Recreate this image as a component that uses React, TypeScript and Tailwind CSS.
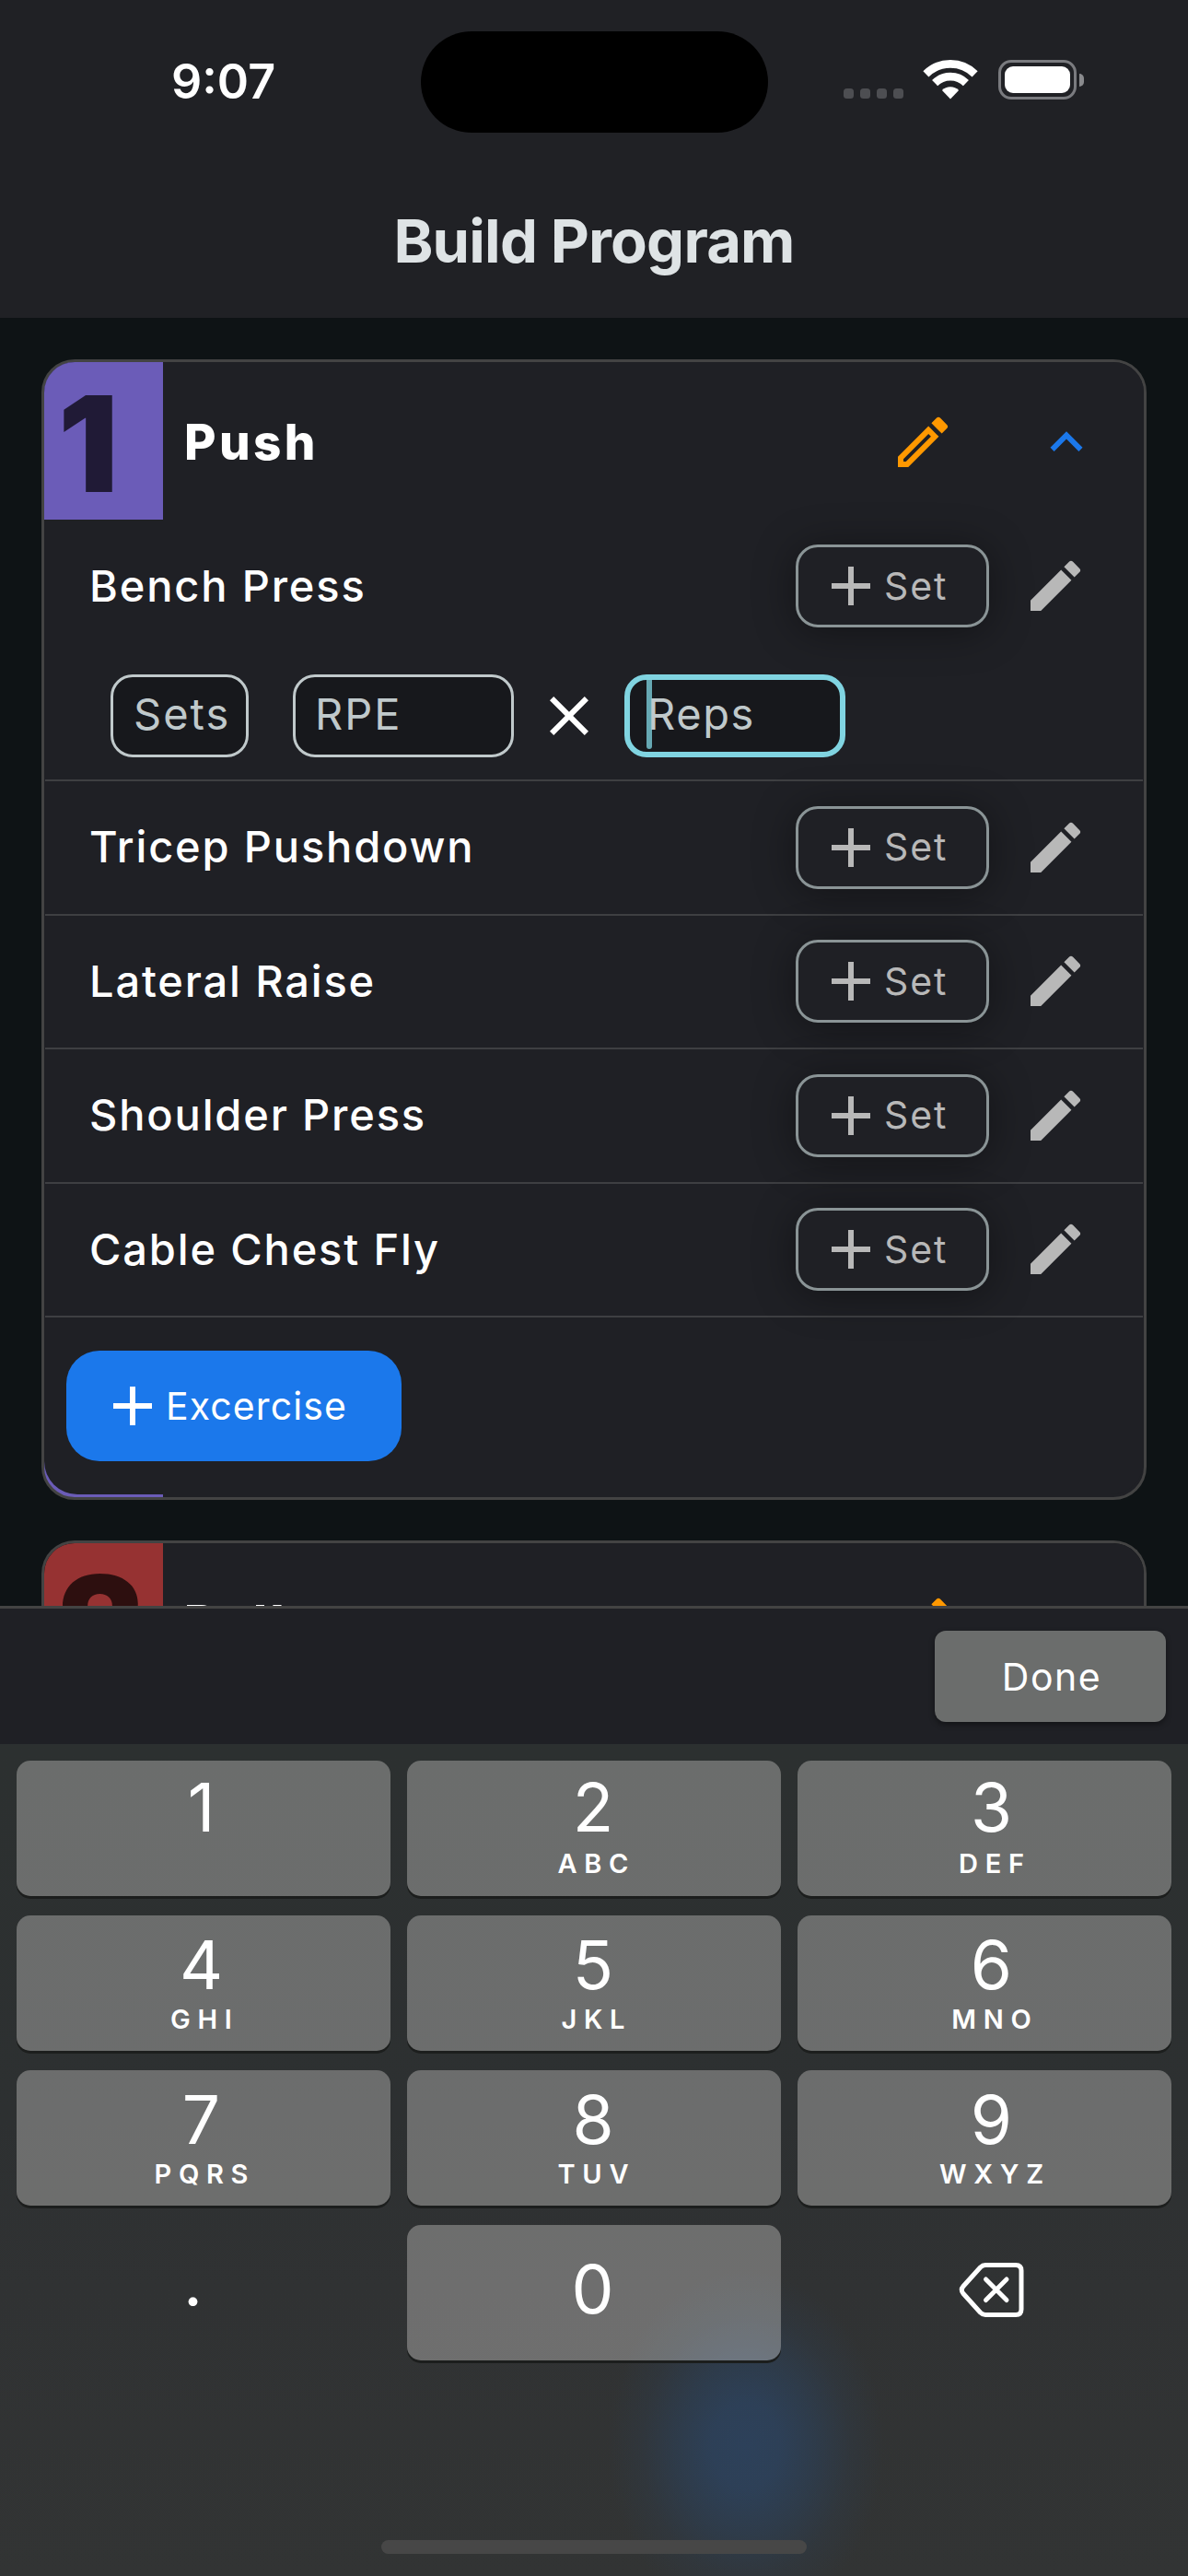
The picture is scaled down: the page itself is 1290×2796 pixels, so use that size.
import React from 'react';
import { MdAdd, MdClose, MdEdit, MdExpandLess, MdOutlineModeEdit } from 'react-icons/md';

function StatusBar() {
  return (
    <div className="flex h-[176px] pt-[34px]">
      <div className="h-[110px] w-[457px] pl-[186px] text-[52px] leading-[110px] font-semibold text-white">9:07</div>
      <div className="h-[110px] w-[377px] rounded-full bg-black" />
      <div className="ml-[82px] flex h-[73px] items-end gap-[7px]">
        {[0, 1, 2, 3].map((i) => (
          <div key={i} className="size-[11px] rounded-[3.5px] bg-[#4d4e52]" />
        ))}
      </div>
      <svg className="mt-[30px] ml-[21px] h-[45px] w-[60px]" viewBox="0 0 60 45" fill="none">
        <g stroke="#fff" strokeWidth="8.6">
          <path d="M3.4 16.4A37.6 37.6 0 0 1 56.6 16.4" />
          <path d="M13.1 26.1A23.9 23.9 0 0 1 46.9 26.1" />
        </g>
        <path d="M30 43.4L20.9 33.9A13.2 13.2 0 0 1 39.1 33.9Z" fill="#fff" />
      </svg>
      <div className="mt-[31px] ml-[22px] h-[43px] w-[85px] rounded-[14px] border-[3px] border-[#7a7b7f] p-[4px]">
        <div className="h-[29px] w-[71px] rounded-[9px] bg-white" />
      </div>
      <div className="mt-[46px] ml-[3px] h-[14px] w-[5px] rounded-r-full bg-[#8a8b8e]" />
    </div>
  );
}

function SetButton() {
  return (
    <button className="flex h-[90px] w-[210px] items-center rounded-[24px] border-[3px] border-[#8a9496] bg-[#1f2025] pl-[21px] text-[#b8b8b8] shadow-[0_4px_45px_rgba(0,0,0,0.4)]">
      <MdAdd size={72} />
      <span className="text-[41px] leading-none tracking-[1.9px]">Set</span>
    </button>
  );
}

function ExerciseRow({ name }: { name: string }) {
  return (
    <div className="flex h-[144px] items-center pr-[60px] pl-[49px]">
      <span className="flex-1 pb-[2px] text-[47px] leading-none font-medium tracking-[1.84px] text-white">{name}</span>
      <SetButton />
      <MdEdit size={72} className="ml-[36px] text-[#b8b8b8]" />
    </div>
  );
}

function Divider() {
  return <div className="mx-px mb-[-0.5px] h-[2px] bg-[#3e3f42]" />;
}

function SetInputs() {
  return (
    <div className="flex h-[138px] items-center pl-[72px] text-[47px] leading-[80px] tracking-[2px] text-[#c0c9cb]">
      <div className="h-[90px] w-[150px] rounded-[24px] border-[3px] border-[#c0c9cb] bg-[#17181c] pl-[22px]">Sets</div>
      <div className="ml-[48px] h-[90px] w-[240px] rounded-[24px] border-[3px] border-[#c0c9cb] bg-[#17181c] pl-[21px]">RPE</div>
      <MdClose size={72} className="mx-[24px] text-white" />
      <div className="flex h-[90px] w-[240px] rounded-[24px] border-[6px] border-[#80d4e1] bg-[#17181c] pl-[18px] leading-[74px]">
        <div className="-mr-[5px] h-[75px] w-[6px] rounded-b-[3px] bg-[#66a8b3]" />
        <span className="relative tracking-[1.6px]">Reps</span>
      </div>
    </div>
  );
}

function DayHeader({ num, name, tint, ink }: { num: string; name: string; tint: string; ink: string }) {
  return (
    <div className="flex h-[171px] shrink-0 items-center bg-[#1f2025] pr-[49px]">
      <div className={`flex h-full w-[129px] items-center pt-[5px] pl-[15px] text-[145px] leading-none font-black ${tint} ${ink}`}>
        {num}
      </div>
      <span className="flex-1 pt-[4px] pl-[23px] text-[53px] leading-none font-extrabold tracking-[3.4px] text-white">{name}</span>
      <MdOutlineModeEdit size={72} className="mt-[3px] text-[#ff9800]" />
      <MdExpandLess size={70} className="mt-[3px] ml-[85px] text-[#1b78eb]" />
    </div>
  );
}

function Keypad() {
  const keys: [string, string][] = [
    ['1', ''], ['2', 'ABC'], ['3', 'DEF'],
    ['4', 'GHI'], ['5', 'JKL'], ['6', 'MNO'],
    ['7', 'PQRS'], ['8', 'TUV'], ['9', 'WXYZ'],
  ];
  const nudge = ['pr-[5px]', 'pr-[2px]', 'pl-[15px]'];
  return (
    <div className="grid grid-cols-3 gap-x-[18px] gap-y-[21px] px-[18px] pt-[18px] text-[73px] text-white">
      {keys.map(([digit, letters], i) => (
        <div
          key={digit}
          className={`flex h-[147px] flex-col items-center rounded-[15px] bg-[rgba(255,253,249,0.3)] shadow-[0_3px_0_#1c1e1d] ${nudge[i % 3]}`}
        >
          <span className={i < 3 ? 'mt-[24px] leading-[53px]' : 'mt-[27px] leading-[53px]'}>{digit}</span>
          <span className={`pl-[7.7px] text-[29px] leading-[21px] font-semibold tracking-[7.7px] ${i < 3 ? 'mt-[24px]' : 'mt-[22px]'}`}>
            {letters}
          </span>
        </div>
      ))}
      <div className="flex h-[147px] justify-center pr-[23px] leading-[123px]">.</div>
      <div className="flex h-[147px] justify-center rounded-[15px] bg-[rgba(255,253,249,0.3)] pr-[3px] leading-[139px] shadow-[0_3px_0_#1c1e1d]">0</div>
      <div className="flex h-[147px] justify-center pt-[38px] pl-[15px]">
        <svg className="h-[66px] w-[76px]" viewBox="0 0 76 66" fill="none" stroke="#fff" strokeWidth="5" strokeLinecap="round" strokeLinejoin="round">
          <path d="M31 5.5H64Q70 5.5 70 11.5V53.5Q70 59.5 64 59.5H31Q28 59.5 25.5 57L7 36.5Q3.5 32.5 7 28.5L25.5 8Q28 5.5 31 5.5Z" />
          <path d="M31.5 21L54 43.5M54 21L31.5 43.5" />
        </svg>
      </div>
    </div>
  );
}

export default function App() {
  return (
    <div className="flex h-[2796px] w-[1290px] flex-col overflow-hidden bg-[#0e1315] font-['Inter',sans-serif]">
      <header className="h-[345px] shrink-0 bg-[#202125]">
        <StatusBar />
        <h1 className="text-center text-[65px] leading-[171px] font-bold tracking-[-0.8px] text-[#dee3e5]">Build Program</h1>
      </header>

      <main className="flex h-[1398px] shrink-0 flex-col gap-[45px] overflow-hidden px-[45px] pt-[45px]">
        <section className="shrink-0 overflow-hidden rounded-[36px] border-[3px] border-[#434343] bg-[linear-gradient(to_right,#6b5cb8_129px,#1f2025_129px)]">
          <DayHeader num="1" name="Push" tint="bg-[#6b5cb8]" ink="text-[#201a36]" />
          <div className="mb-[3px] rounded-b-[36px] bg-[#1f2025]">
            <ExerciseRow name="Bench Press" />
            <SetInputs />
            <Divider />
            <ExerciseRow name="Tricep Pushdown" />
            <Divider />
            <ExerciseRow name="Lateral Raise" />
            <Divider />
            <ExerciseRow name="Shoulder Press" />
            <Divider />
            <ExerciseRow name="Cable Chest Fly" />
            <Divider />
            <div className="px-[24px] py-[36px]">
              <button className="flex h-[120px] w-[364px] items-center rounded-[36px] bg-[#1b78eb] pl-[36px] text-white">
                <MdAdd size={72} />
                <span className="pt-[2px] text-[41px] leading-none tracking-[1.1px]">Excercise</span>
              </button>
            </div>
          </div>
        </section>

        <section className="-mt-px shrink-0 overflow-hidden rounded-t-[36px] border-[3px] border-b-0 border-[#434343]">
          <DayHeader num="2" name="Pull" tint="bg-[#963232]" ink="text-[#2d0f0f]" />
        </section>
      </main>

      <div className="flex h-[150px] shrink-0 items-center justify-end border-t-[3px] border-[#434343] bg-[#1f2025] pr-[24px]">
        <button className="h-[99px] w-[251px] rounded-[12px] bg-[#6b6d6c] pt-[2px] pl-[3px] text-[41px] tracking-[1.5px] text-white shadow-[0_3px_6px_rgba(0,0,0,0.4)]">
          Done
        </button>
      </div>

      <div className="flex flex-1 flex-col justify-between bg-[radial-gradient(ellipse_150px_190px_at_810px_762px,rgba(45,65,90,1)_0%,rgba(45,65,90,0.92)_25%,rgba(45,63,84,0.7)_50%,rgba(46,60,76,0.35)_75%,rgba(48,55,64,0)_100%),linear-gradient(#2c3030_0,#2d3031_45%,#303233_65%,#323434_100%)] pb-[24px]">
        <Keypad />
        <div className="h-[15px] w-[462px] self-center rounded-full bg-[#474747]" />
      </div>
    </div>
  );
}
